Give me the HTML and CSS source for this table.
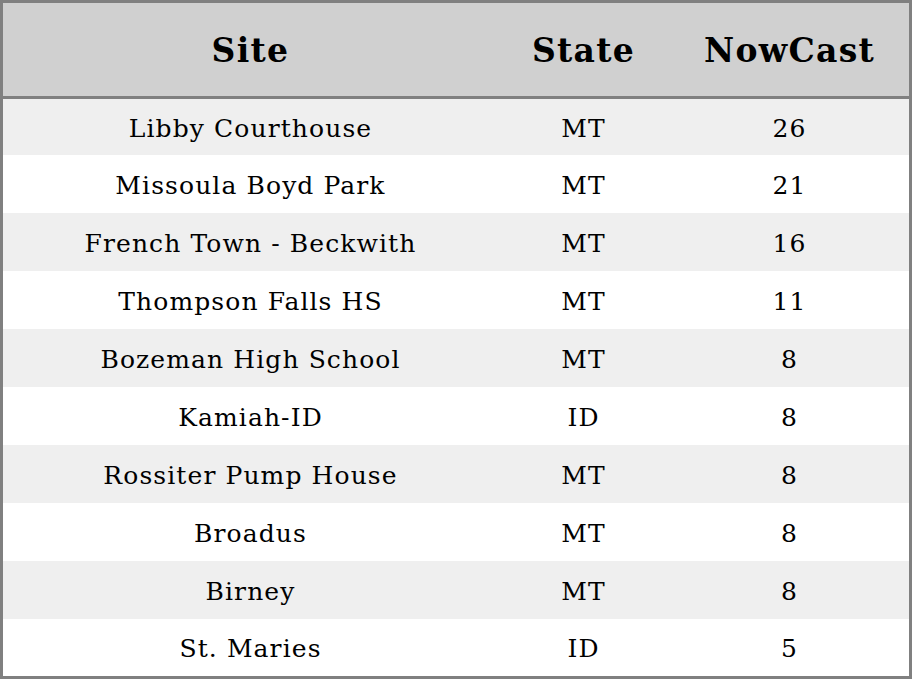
FILE: index.html
```html
<!DOCTYPE html>
<html>
<head>
<meta charset="utf-8">
<link rel="stylesheet" href="styles.css">
</head>
<body>
<table class="aq">
  <colgroup>
    <col class="c-site">
    <col class="c-state">
    <col class="c-now">
  </colgroup>
  <thead>
    <tr><th>Site</th><th>State</th><th>NowCast</th></tr>
  </thead>
  <tbody>
    <tr><td>Libby Courthouse</td><td>MT</td><td>26</td></tr>
    <tr><td>Missoula Boyd Park</td><td>MT</td><td>21</td></tr>
    <tr><td>French Town - Beckwith</td><td>MT</td><td>16</td></tr>
    <tr><td>Thompson Falls HS</td><td>MT</td><td>11</td></tr>
    <tr><td>Bozeman High School</td><td>MT</td><td>8</td></tr>
    <tr><td>Kamiah-ID</td><td>ID</td><td>8</td></tr>
    <tr><td>Rossiter Pump House</td><td>MT</td><td>8</td></tr>
    <tr><td>Broadus</td><td>MT</td><td>8</td></tr>
    <tr><td>Birney</td><td>MT</td><td>8</td></tr>
    <tr><td>St. Maries</td><td>ID</td><td>5</td></tr>
  </tbody>
</table>
</body>
</html>
```

FILE: styles.css
```css
html, body {
  margin: 0;
  padding: 0;
  background: #ffffff;
}
.aq {
  width: 912px;
  height: 679px;
  border-collapse: separate;
  border-spacing: 0;
  border: 3px solid #808080;
  box-sizing: border-box;
  table-layout: fixed;
  font-family: "DejaVu Serif", serif;
  color: #000;
}
.c-site { width: 494px; }
.c-state { width: 172px; }
.c-now { width: 240px; }
.aq th {
  height: 91px;
  background: #d0d0d0;
  border-bottom: 3px solid #808080;
  font-size: 33px;
  letter-spacing: 1.3px;
  font-weight: bold;
  text-align: center;
  padding: 2px 0 0 1px;
  line-height: 1;
}
.aq td {
  height: 56px;
  text-align: center;
  font-size: 25px;
  letter-spacing: 1.1px;
  padding: 2px 0 0 1px;
  line-height: 1;
}
.aq tbody tr:first-child td { height: 54px; }
.aq tbody tr:last-child td { height: 55px; }
.aq tbody tr:nth-child(odd) td {
  background: #efefef;
}
```
